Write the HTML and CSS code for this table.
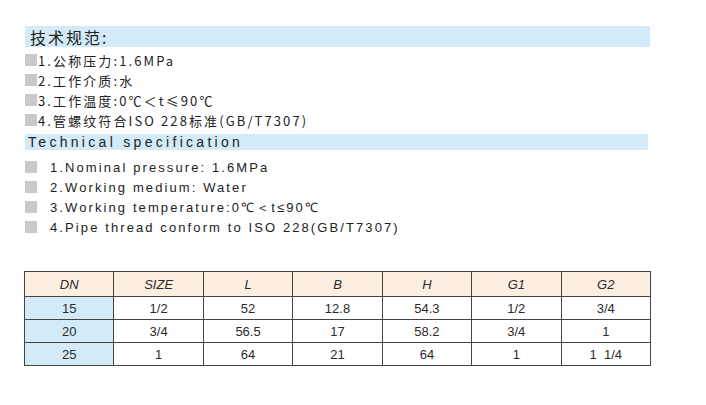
FILE: index.html
```html
<!DOCTYPE html>
<html>
<head>
<meta charset="utf-8">
<link rel="stylesheet" href="styles.css">
</head>
<body>
<div class="page">
  <div class="banner cn-banner">技术规范:</div>
  <ul class="list cn-list">
    <li><span class="sq"></span>1.公称压力:1.6MPa</li>
    <li><span class="sq"></span>2.工作介质:水</li>
    <li><span class="sq"></span>3.工作温度:0℃＜t≤90℃</li>
    <li><span class="sq"></span>4.管螺纹符合ISO 228标准(GB/T7307)</li>
  </ul>
  <div class="banner en-banner">Technical specification</div>
  <ul class="list en-list">
    <li><span class="sq"></span>1.Nominal pressure: 1.6MPa</li>
    <li><span class="sq"></span>2.Working medium: Water</li>
    <li><span class="sq"></span>3.Working temperature:0℃＜t≤90℃</li>
    <li><span class="sq"></span>4.Pipe thread conform to ISO 228(GB/T7307)</li>
  </ul>
  <table class="spec">
    <thead>
      <tr><th>DN</th><th>SIZE</th><th>L</th><th>B</th><th>H</th><th>G1</th><th>G2</th></tr>
    </thead>
    <tbody>
      <tr><td class="dn">15</td><td>1/2</td><td>52</td><td>12.8</td><td>54.3</td><td>1/2</td><td>3/4</td></tr>
      <tr><td class="dn">20</td><td>3/4</td><td>56.5</td><td>17</td><td>58.2</td><td>3/4</td><td>1</td></tr>
      <tr><td class="dn">25</td><td>1</td><td>64</td><td>21</td><td>64</td><td>1</td><td>1&nbsp;&nbsp;1/4</td></tr>
    </tbody>
  </table>
</div>
</body>
</html>
```
FILE: styles.css
```css
html, body { margin: 0; padding: 0; background: #fff; }
.page {
  padding: 26px 0 0 25px;
  width: 625px;
  color: #222;
}
.banner {
  background: #d3eaf9;
  display: flex;
  align-items: center;
}
.cn-banner {
  height: 21px;
  padding-left: 5px;
  font-family: "Noto Sans CJK SC", sans-serif;
  font-size: 16px;
  letter-spacing: 2px;
  color: #222;
}
.en-banner {
  height: 16px;
  margin-top: 4px;
  width: 620px;
  padding-left: 3px;
  font-family: "Liberation Sans", sans-serif;
  font-size: 14px;
  letter-spacing: 3.3px;
}
.list { list-style: none; margin: 0; padding: 0; }
.list li {
  display: flex;
  align-items: center;
  height: 20px;
}
.sq {
  display: inline-block;
  width: 12px;
  height: 12px;
  background: #c9c9c9;
  flex: none;
}
.cn-list { padding-top: 3px; }
.cn-list li {
  font-family: "Noto Sans CJK SC", sans-serif;
  font-size: 13px;
  letter-spacing: 2.1px;
}
.cn-list .sq { margin-right: 1px; }
.en-list { padding-top: 7px; }
.en-list li {
  font-family: "Liberation Sans", sans-serif;
  font-size: 13px;
  letter-spacing: 2.1px;
}
.en-list .sq { margin-right: 13px; }
.spec {
  margin-top: 34px;
  margin-left: -1px;
  border-collapse: collapse;
  width: 627px;
  table-layout: fixed;
  font-family: "Liberation Sans", Arial, sans-serif;
  font-size: 13px;
  color: #2a2a2a;
  border: 1.5px solid #666;
}
.spec th, .spec td {
  border: 1px solid #444;
  text-align: center;
  padding: 0;
  height: 22px;
}
.spec th {
  background: #fdeee2;
  font-weight: normal;
  font-style: italic;
  height: 24px;
}
.spec td.dn { background: #d3eaf9; }
```
